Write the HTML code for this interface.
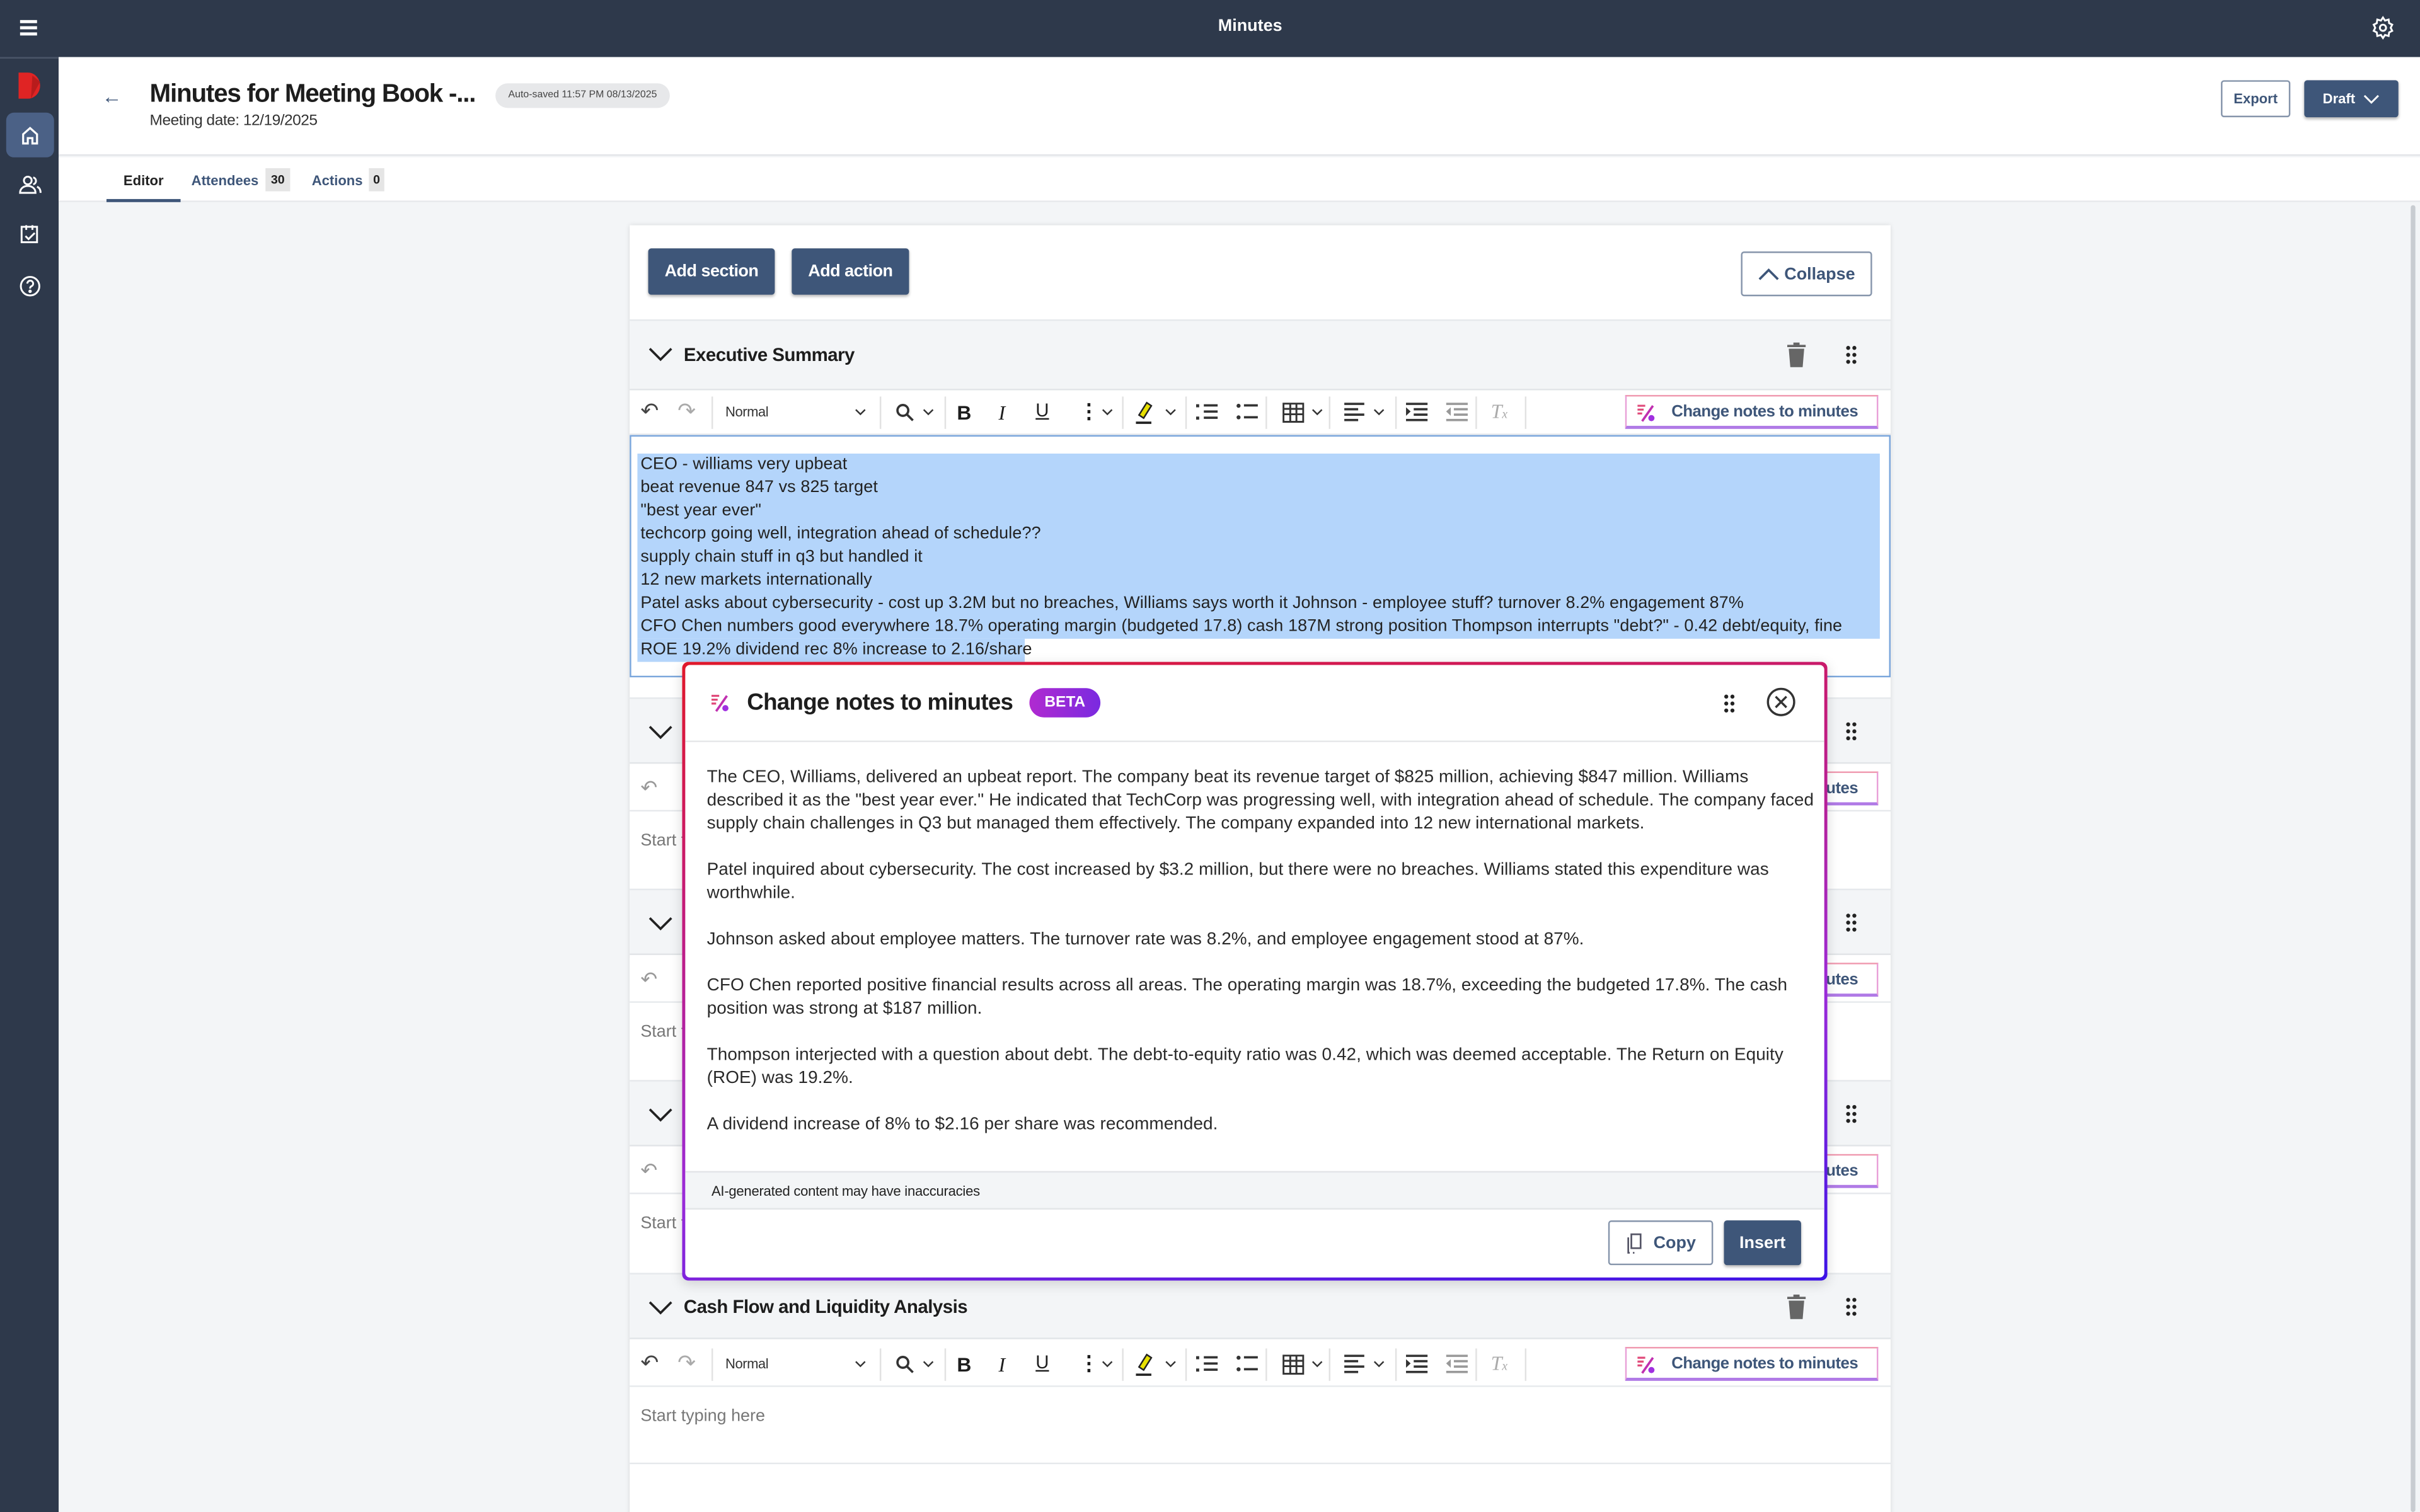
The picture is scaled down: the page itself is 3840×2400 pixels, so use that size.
<!DOCTYPE html>
<html><head><meta charset="utf-8">
<style>
*{box-sizing:border-box;margin:0;padding:0}
html,body{width:3840px;height:2400px;overflow:hidden;background:#f3f5f7}
#s{position:absolute;left:0;top:0;width:1568px;height:980px;transform:scale(2.44898);transform-origin:0 0;font-family:"Liberation Sans",sans-serif;color:#1d1d1d;background:#f3f5f7;overflow:hidden}
.a{position:absolute}
.dark{background:#2e394b}
.btnd{position:absolute;background:#3e5679;color:#fff;font-weight:bold;font-size:11px;display:flex;align-items:center;justify-content:center;border-radius:2px;box-shadow:0 1px 2px rgba(0,0,0,.3)}
.btno{position:absolute;background:#fff;border:1px solid #8695ab;color:#3e5679;font-weight:bold;font-size:11px;display:flex;align-items:center;justify-content:center;border-radius:2px}
.sh{position:absolute;left:408px;width:817px;background:#f3f5f7;border-top:1px solid #e6e9ec;border-bottom:1px solid #e2e5e8}
.sh .t{position:absolute;left:35px;font-weight:bold;font-size:12px;letter-spacing:-.2px}
.tb{position:absolute;left:408px;width:817px;height:29px;background:#fff;border-bottom:1px solid #e6e9ec}
.ct{position:absolute;left:408px;width:817px;background:#fff}
.ph{position:absolute;left:7px;font-size:11px;color:#777}
.cn{position:absolute;left:645px;top:3px;width:164px;height:22px;border:1px solid #e9a0d8;border-top-color:#f09ab0;border-bottom:2px solid #b07ae6;font-size:10.5px;font-weight:bold;color:#3e5679;padding-left:29px;line-height:20px;letter-spacing:-.2px}
.hl{background:#b4d5fb}
p.m{margin-bottom:15px;white-space:nowrap}
</style></head><body><div id="s">

<div class="a dark" style="left:0;top:0;width:1568px;height:37px"></div>
<div class="a" style="left:13px;top:12px;width:11px;height:12px">
<div style="height:1.5px;background:#fff;margin-top:1px"></div><div style="height:1.5px;background:#fff;margin-top:2.5px"></div><div style="height:1.5px;background:#fff;margin-top:2.5px"></div></div>
<div class="a" style="left:0;width:1620px;top:11px;text-align:center;color:#fff;font-weight:bold;font-size:11px">Minutes</div>
<svg class="a" style="left:1536px;top:10px" width="16" height="16" viewBox="0 0 24 24" fill="none" stroke="#fff" stroke-width="1.8"><circle cx="12" cy="12" r="3"/><path d="M12 2l2 3 3.5-1 .5 3.5 3 1.5-1.5 3 1.5 3-3 1.5-.5 3.5-3.5-1-2 3-2-3-3.5 1-.5-3.5-3-1.5 1.5-3-1.5-3 3-1.5.5-3.5 3.5 1z"/></svg>

<div class="a dark" style="left:0;top:37px;width:38px;height:943px;border-top:1px solid #4a5568"></div>
<svg class="a" style="left:12px;top:47px" width="16" height="17" viewBox="0 0 16 17"><path d="M0 0h6a8 8.5 0 0 1 0 17H0z" fill="#e02424"/><path d="M9 2l5 4-6 11z" fill="#b81c1c"/></svg>
<div class="a" style="left:4px;top:73px;width:31px;height:29px;background:#4b6186;border-radius:5px"></div>
<svg class="a" style="left:13px;top:81px" width="13" height="13" viewBox="0 0 13 13" fill="none" stroke="#fff" stroke-width="1.3"><path d="M2 6L6.5 2 11 6v6H8V8.5H5V12H2z"/></svg>
<svg class="a" style="left:12px;top:113px" width="15" height="14" viewBox="0 0 15 14" fill="none" stroke="#fff" stroke-width="1.2"><circle cx="6" cy="4" r="2.5"/><path d="M1 12c0-3 2.5-4.5 5-4.5s5 1.5 5 4.5z"/><path d="M9.5 2a2.3 2.3 0 0 1 0 4.5M12 8c1.5.6 2.3 2 2.3 4"/></svg>
<svg class="a" style="left:12px;top:145px" width="15" height="14" viewBox="0 0 15 14" fill="none" stroke="#fff" stroke-width="1.2"><path d="M2 2h10v10H2zM5 1v3M9 1v3M4.5 8l2 2 4-4"/></svg>
<svg class="a" style="left:12px;top:178px" width="15" height="15" viewBox="0 0 15 15" fill="none" stroke="#fff" stroke-width="1.2"><circle cx="7.5" cy="7.5" r="6"/><path d="M5.7 5.8a1.9 1.9 0 1 1 2.5 1.8c-.6.3-.7.7-.7 1.4"/><circle cx="7.5" cy="10.8" r=".5" fill="#fff"/></svg>

<div class="a" style="left:38px;top:37px;width:1530px;height:64px;background:#fff;border-bottom:1px solid #e3e5e8"></div>
<div class="a" style="left:66px;top:55px;font-size:13px;color:#3e5679">&#8592;</div>
<div class="a" style="left:97px;top:52px;font-size:16.5px;font-weight:bold;letter-spacing:-.5px">Minutes for Meeting Book -...</div>
<div class="a" style="left:97px;top:73px;font-size:10px;color:#333;letter-spacing:-.2px">Meeting date: 12/19/2025</div>
<div class="a" style="left:321px;top:54px;width:113px;height:16px;background:#e7e8ea;border-radius:8px;font-size:6.5px;color:#444;text-align:center;line-height:16px">Auto-saved 11:57 PM 08/13/2025</div>
<div class="btno" style="left:1439px;top:52px;width:45px;height:24px;font-size:9px">Export</div>
<div class="btnd" style="left:1493px;top:52px;width:61px;height:24px;font-size:9px">Draft&nbsp;&nbsp;<svg width="11" height="7" viewBox="0 0 11 7" fill="none" stroke="#fff" stroke-width="1.2"><path d="M1 1l4.5 4.5L10 1"/></svg></div>

<div class="a" style="left:38px;top:102px;width:1530px;height:29px;background:#fff;border-bottom:1px solid #e6e8eb"></div>
<div class="a" style="left:80px;top:112px;font-size:9px;font-weight:bold;color:#222">Editor</div>
<div class="a" style="left:69px;top:129px;width:48px;height:2px;background:#3e5679"></div>
<div class="a" style="left:124px;top:112px;font-size:9px;font-weight:bold;color:#3e5679">Attendees</div>
<div class="a" style="left:172px;top:109px;width:16px;height:15px;background:#e5e5e5;font-size:8px;font-weight:bold;text-align:center;line-height:15px">30</div>
<div class="a" style="left:202px;top:112px;font-size:9px;font-weight:bold;color:#3e5679">Actions</div>
<div class="a" style="left:239px;top:109px;width:10px;height:15px;background:#e5e5e5;font-size:8px;font-weight:bold;text-align:center;line-height:15px">0</div>
<div class="a" style="left:1562px;top:133px;width:3px;height:847px;background:#c8ccd1;border-radius:2px"></div>

<div class="a" style="left:408px;top:146px;width:817px;height:840px;background:#fff;box-shadow:0 0 3px rgba(0,0,0,.12)"></div>
<div class="btnd" style="left:420px;top:161px;width:82px;height:30px;letter-spacing:-.2px">Add section</div>
<div class="btnd" style="left:513px;top:161px;width:76px;height:30px;letter-spacing:-.2px">Add action</div>
<div class="btno" style="left:1128px;top:163px;width:85px;height:29px;border-width:1.5px"><svg width="14" height="9" viewBox="0 0 14 9" fill="none" stroke="#3e5679" stroke-width="1.5"><path d="M1 8l6-6 6 6"/></svg>&nbsp;Collapse</div>

<div class="sh" style="top:207px;height:46px"><svg class="a" style="left:12px;top:17px" width="16" height="10" viewBox="0 0 16 10" fill="none" stroke="#222" stroke-width="1.5"><path d="M1 1l7 7 7-7"/></svg><div class="t" style="top:15px">Executive Summary</div>
<svg class="a" style="left:750px;top:14px" width="12" height="16" viewBox="0 0 12 16" fill="#666"><path d="M4 0h4v1.5h4V3H0V1.5h4zM1 4h10l-1 12H2z"/></svg>
<svg class="a" style="left:788px;top:16px" width="7" height="12" viewBox="0 0 7 12" fill="#222"><circle cx="1.5" cy="1.5" r="1.3"/><circle cx="5.5" cy="1.5" r="1.3"/><circle cx="1.5" cy="6" r="1.3"/><circle cx="5.5" cy="6" r="1.3"/><circle cx="1.5" cy="10.5" r="1.3"/><circle cx="5.5" cy="10.5" r="1.3"/></svg></div>

<div id="tb1" class="tb" style="top:253px"></div>

<div class="ct" style="top:282px;height:157px;border:1px solid #7aa6dc"></div>
<div class="a" style="left:415px;top:294px;width:803px;font-size:11px;line-height:15px;letter-spacing:.05px;color:#222">
<div class="hl" style="height:120px;position:absolute;left:-2px;top:0;width:805px"></div>
<div class="hl" style="position:absolute;left:-2px;top:120px;width:251px;height:15px"></div>
<div style="position:relative">CEO - williams very upbeat<br>beat revenue 847 vs 825 target<br>"best year ever"<br>techcorp going well, integration ahead of schedule??<br>supply chain stuff in q3 but handled it<br>12 new markets internationally<br>Patel asks about cybersecurity - cost up 3.2M but no breaches, Williams says worth it Johnson - employee stuff? turnover 8.2% engagement 87%<br>CFO Chen numbers good everywhere 18.7% operating margin (budgeted 17.8) cash 187M strong position Thompson interrupts "debt?" - 0.42 debt/equity, fine<br>ROE 19.2% dividend rec 8% increase to 2.16/share</div></div>

<div class="sh" style="top:452px;height:43px"><svg class="a" style="left:12px;top:17px" width="16" height="10" viewBox="0 0 16 10" fill="none" stroke="#222" stroke-width="1.5"><path d="M1 1l7 7 7-7"/></svg><svg class="a" style="left:788px;top:15px" width="7" height="12" viewBox="0 0 7 12" fill="#222"><circle cx="1.5" cy="1.5" r="1.3"/><circle cx="5.5" cy="1.5" r="1.3"/><circle cx="1.5" cy="6" r="1.3"/><circle cx="5.5" cy="6" r="1.3"/><circle cx="1.5" cy="10.5" r="1.3"/><circle cx="5.5" cy="10.5" r="1.3"/></svg></div>
<div class="tb" style="top:497px"><div class="a" style="left:7px;top:6px;font-size:13px;color:#999">&#8630;</div><div class="cn">Change notes to minutes</div></div>
<div class="ct" style="top:526px;height:50px"><div class="ph" style="top:13px">Start typing here</div></div>
<div class="sh" style="top:576px;height:43px"><svg class="a" style="left:12px;top:17px" width="16" height="10" viewBox="0 0 16 10" fill="none" stroke="#222" stroke-width="1.5"><path d="M1 1l7 7 7-7"/></svg><svg class="a" style="left:788px;top:15px" width="7" height="12" viewBox="0 0 7 12" fill="#222"><circle cx="1.5" cy="1.5" r="1.3"/><circle cx="5.5" cy="1.5" r="1.3"/><circle cx="1.5" cy="6" r="1.3"/><circle cx="5.5" cy="6" r="1.3"/><circle cx="1.5" cy="10.5" r="1.3"/><circle cx="5.5" cy="10.5" r="1.3"/></svg></div>
<div class="tb" style="top:621px"><div class="a" style="left:7px;top:6px;font-size:13px;color:#999">&#8630;</div><div class="cn">Change notes to minutes</div></div>
<div class="ct" style="top:650px;height:50px"><div class="ph" style="top:13px">Start typing here</div></div>
<div class="sh" style="top:700px;height:43px"><svg class="a" style="left:12px;top:17px" width="16" height="10" viewBox="0 0 16 10" fill="none" stroke="#222" stroke-width="1.5"><path d="M1 1l7 7 7-7"/></svg><svg class="a" style="left:788px;top:15px" width="7" height="12" viewBox="0 0 7 12" fill="#222"><circle cx="1.5" cy="1.5" r="1.3"/><circle cx="5.5" cy="1.5" r="1.3"/><circle cx="1.5" cy="6" r="1.3"/><circle cx="5.5" cy="6" r="1.3"/><circle cx="1.5" cy="10.5" r="1.3"/><circle cx="5.5" cy="10.5" r="1.3"/></svg></div>
<div class="tb" style="top:745px"><div class="a" style="left:7px;top:6px;font-size:13px;color:#999">&#8630;</div><div class="cn">Change notes to minutes</div></div>
<div class="ct" style="top:774px;height:50px"><div class="ph" style="top:13px">Start typing here</div></div>

<div class="sh" style="top:825px;height:43px"><svg class="a" style="left:12px;top:17px" width="16" height="10" viewBox="0 0 16 10" fill="none" stroke="#222" stroke-width="1.5"><path d="M1 1l7 7 7-7"/></svg><div class="t" style="top:14px">Cash Flow and Liquidity Analysis</div>
<svg class="a" style="left:750px;top:13px" width="12" height="16" viewBox="0 0 12 16" fill="#666"><path d="M4 0h4v1.5h4V3H0V1.5h4zM1 4h10l-1 12H2z"/></svg>
<svg class="a" style="left:788px;top:15px" width="7" height="12" viewBox="0 0 7 12" fill="#222"><circle cx="1.5" cy="1.5" r="1.3"/><circle cx="5.5" cy="1.5" r="1.3"/><circle cx="1.5" cy="6" r="1.3"/><circle cx="5.5" cy="6" r="1.3"/><circle cx="1.5" cy="10.5" r="1.3"/><circle cx="5.5" cy="10.5" r="1.3"/></svg></div>
<div id="tb2" class="tb" style="top:870px"></div>
<div class="ct" style="top:899px;height:50px;border-bottom:1px solid #e6e9ec"><div class="ph" style="top:13px">Start typing here</div></div>

<div class="a" style="left:442px;top:429px;width:742px;height:401px;border-radius:4px;background:linear-gradient(170deg,#e0182a 0%,#c41a78 30%,#9a2ad8 65%,#3c12e6 100%);padding:2px;box-shadow:0 2px 8px rgba(0,0,0,.15)">
<div style="position:relative;width:100%;height:100%;background:#fff;border-radius:3px;overflow:hidden">
<svg class="a" style="left:16px;top:18px" width="14" height="14" viewBox="0 0 14 14"><path d="M1 2h5M1 4.5h4M1 7h3" stroke="#e04a7a" stroke-width="1.3"/><path d="M11 2L4 12" stroke="#c030b0" stroke-width="1.5"/><circle cx="10" cy="10" r="2" fill="#a030e0"/></svg>
<div class="a" style="left:40px;top:16px;font-size:15px;font-weight:bold;letter-spacing:-.3px">Change notes to minutes</div>
<div class="a" style="left:223px;top:15px;width:46px;height:19px;border-radius:10px;background:linear-gradient(90deg,#b02ad0,#7a2ae0);color:#fff;font-size:10px;font-weight:bold;text-align:center;line-height:19px">BETA</div>
<svg class="a" style="left:673px;top:19px" width="7" height="12" viewBox="0 0 7 12" fill="#222"><circle cx="1.5" cy="1.5" r="1.3"/><circle cx="5.5" cy="1.5" r="1.3"/><circle cx="1.5" cy="6" r="1.3"/><circle cx="5.5" cy="6" r="1.3"/><circle cx="1.5" cy="10.5" r="1.3"/><circle cx="5.5" cy="10.5" r="1.3"/></svg>
<svg class="a" style="left:700px;top:14px" width="20" height="20" viewBox="0 0 20 20" fill="none" stroke="#333" stroke-width="1.4"><circle cx="10" cy="10" r="8.5"/><path d="M6.5 6.5l7 7M13.5 6.5l-7 7"/></svg>
<div class="a" style="left:0;top:49px;width:100%;height:1px;background:#e6e8ea"></div>
<div class="a" style="left:14px;top:66px;width:706px;font-size:11.4px;line-height:15px;letter-spacing:.03px;color:#2a2a2a">
<p class="m">The CEO, Williams, delivered an upbeat report. The company beat its revenue target of $825 million, achieving $847 million. Williams<br>described it as the "best year ever." He indicated that TechCorp was progressing well, with integration ahead of schedule. The company faced<br>supply chain challenges in Q3 but managed them effectively. The company expanded into 12 new international markets.</p>
<p class="m">Patel inquired about cybersecurity. The cost increased by $3.2 million, but there were no breaches. Williams stated this expenditure was<br>worthwhile.</p>
<p class="m">Johnson asked about employee matters. The turnover rate was 8.2%, and employee engagement stood at 87%.</p>
<p class="m">CFO Chen reported positive financial results across all areas. The operating margin was 18.7%, exceeding the budgeted 17.8%. The cash<br>position was strong at $187 million.</p>
<p class="m">Thompson interjected with a question about debt. The debt-to-equity ratio was 0.42, which was deemed acceptable. The Return on Equity<br>(ROE) was 19.2%.</p>
<p class="m">A dividend increase of 8% to $2.16 per share was recommended.</p></div>
<div class="a" style="left:0;top:328px;width:100%;height:25px;background:#f3f5f7;border-top:1px solid #e3e5e8;border-bottom:1px solid #e3e5e8;font-size:9px;padding-left:17px;line-height:24px;color:#222;letter-spacing:-.1px">AI-generated content may have inaccuracies</div>
<div class="btno" style="left:598px;top:360px;width:68px;height:29px;border-width:1.5px"><svg width="12" height="14" viewBox="0 0 12 14" fill="none" stroke="#556" stroke-width="1.1"><rect x="4" y="1" width="6" height="9"/><path d="M2 3v10h1M5 13h1"/></svg>&nbsp;&nbsp;Copy</div>
<div class="btnd" style="left:673px;top:360px;width:50px;height:29px">Insert</div>
</div></div>

<script>
function tb(){return `
<div class="a" style="left:7px;top:5px;font-size:14px;color:#444">&#8630;</div>
<div class="a" style="left:31px;top:5px;font-size:14px;color:#aaa">&#8631;</div>
<div class="a" style="left:53px;top:4px;width:1px;height:21px;background:#e2e2e2"></div>
<div class="a" style="left:62px;top:9px;font-size:9px;color:#333;letter-spacing:-.2px">Normal</div>
<svg class="a" style="left:146px;top:12px" width="7" height="5" viewBox="0 0 7 5" fill="none" stroke="#333"><path d="M.5.5l3 3 3-3"/></svg>
<div class="a" style="left:162px;top:4px;width:1px;height:21px;background:#e2e2e2"></div>
<svg class="a" style="left:172px;top:8px" width="13" height="13" viewBox="0 0 13 13" fill="none" stroke="#333" stroke-width="1.5"><circle cx="5" cy="5" r="3.5"/><path d="M7.5 7.5l4 4"/></svg>
<svg class="a" style="left:190px;top:12px" width="7" height="5" viewBox="0 0 7 5" fill="none" stroke="#333"><path d="M.5.5l3 3 3-3"/></svg>
<div class="a" style="left:204px;top:4px;width:1px;height:21px;background:#e2e2e2"></div>
<div class="a" style="left:212px;top:7px;font-size:13px;font-weight:bold">B</div>
<div class="a" style="left:239px;top:7px;font-size:13px;font-style:italic;font-family:'Liberation Serif',serif">I</div>
<div class="a" style="left:263px;top:6px;font-size:12px;text-decoration:underline">U</div>
<div class="a" style="left:291px;top:6px;font-size:13px;font-weight:bold">&#8942;</div>
<svg class="a" style="left:306px;top:12px" width="7" height="5" viewBox="0 0 7 5" fill="none" stroke="#333"><path d="M.5.5l3 3 3-3"/></svg>
<div class="a" style="left:319px;top:4px;width:1px;height:21px;background:#e2e2e2"></div>
<svg class="a" style="left:327px;top:7px" width="12" height="15" viewBox="0 0 12 15"><path d="M8 1l3 2-5 8-3-2z" fill="#e8e000" stroke="#222" stroke-width="1"/><path d="M1 14h10" stroke="#222" stroke-width="1.5"/></svg>
<svg class="a" style="left:347px;top:12px" width="7" height="5" viewBox="0 0 7 5" fill="none" stroke="#333"><path d="M.5.5l3 3 3-3"/></svg>
<div class="a" style="left:360px;top:4px;width:1px;height:21px;background:#e2e2e2"></div>
<svg class="a" style="left:367px;top:8px" width="14" height="12" viewBox="0 0 14 12" fill="#333"><rect x="0" y="1" width="2" height="2"/><rect x="0" y="9" width="2" height="2"/><rect x="5" y="1" width="9" height="1.5"/><rect x="5" y="5" width="9" height="1.5"/><rect x="5" y="9" width="9" height="1.5"/></svg>
<svg class="a" style="left:393px;top:8px" width="14" height="12" viewBox="0 0 14 12" fill="#333"><circle cx="1.5" cy="2" r="1.3"/><circle cx="1.5" cy="9.5" r="1.3"/><rect x="5" y="1" width="9" height="1.5"/><rect x="5" y="8.7" width="9" height="1.5"/></svg>
<div class="a" style="left:412px;top:4px;width:1px;height:21px;background:#e2e2e2"></div>
<svg class="a" style="left:423px;top:8px" width="14" height="13" viewBox="0 0 14 13" fill="none" stroke="#333" stroke-width="1.2"><rect x=".6" y=".6" width="12.8" height="11.8"/><path d="M.6 4h12.8M.6 7.5h12.8M5 .6v11.8M9 .6v11.8"/></svg>
<svg class="a" style="left:442px;top:12px" width="7" height="5" viewBox="0 0 7 5" fill="none" stroke="#333"><path d="M.5.5l3 3 3-3"/></svg>
<div class="a" style="left:453px;top:4px;width:1px;height:21px;background:#e2e2e2"></div>
<svg class="a" style="left:463px;top:8px" width="13" height="12" viewBox="0 0 13 12" fill="#333"><rect y="0" width="13" height="1.5"/><rect y="3.5" width="9" height="1.5"/><rect y="7" width="13" height="1.5"/><rect y="10.5" width="9" height="1.5"/></svg>
<svg class="a" style="left:482px;top:12px" width="7" height="5" viewBox="0 0 7 5" fill="none" stroke="#333"><path d="M.5.5l3 3 3-3"/></svg>
<div class="a" style="left:496px;top:4px;width:1px;height:21px;background:#e2e2e2"></div>
<svg class="a" style="left:503px;top:8px" width="14" height="12" viewBox="0 0 14 12" fill="#333"><rect width="14" height="1.5"/><rect x="5" y="3.5" width="9" height="1.5"/><rect x="5" y="7" width="9" height="1.5"/><rect y="10.5" width="14" height="1.5"/><path d="M0 3l3 2.7L0 8.5z"/></svg>
<svg class="a" style="left:529px;top:8px" width="14" height="12" viewBox="0 0 14 12" fill="#999"><rect width="14" height="1.5"/><rect x="5" y="3.5" width="9" height="1.5"/><rect x="5" y="7" width="9" height="1.5"/><rect y="10.5" width="14" height="1.5"/><path d="M3 3L0 5.7 3 8.5z"/></svg>
<div class="a" style="left:548px;top:4px;width:1px;height:21px;background:#e2e2e2"></div>
<div class="a" style="left:558px;top:6px;font-size:13px;font-style:italic;color:#aaa;font-family:'Liberation Serif',serif">T<span style="font-size:8px">x</span></div>
<div class="a" style="left:580px;top:4px;width:1px;height:21px;background:#e2e2e2"></div>
<div class="cn"><svg class="a" style="left:6px;top:4px" width="14" height="13" viewBox="0 0 14 13"><path d="M1 2h5M1 4.5h4M1 7h3" stroke="#e04a7a" stroke-width="1.3"/><path d="M11 2L4 12" stroke="#c030b0" stroke-width="1.5"/><circle cx="10" cy="10" r="2" fill="#a030e0"/></svg>Change notes to minutes</div>`}
document.getElementById('tb1').innerHTML=tb();document.getElementById('tb2').innerHTML=tb();
</script>
</div></body></html>
